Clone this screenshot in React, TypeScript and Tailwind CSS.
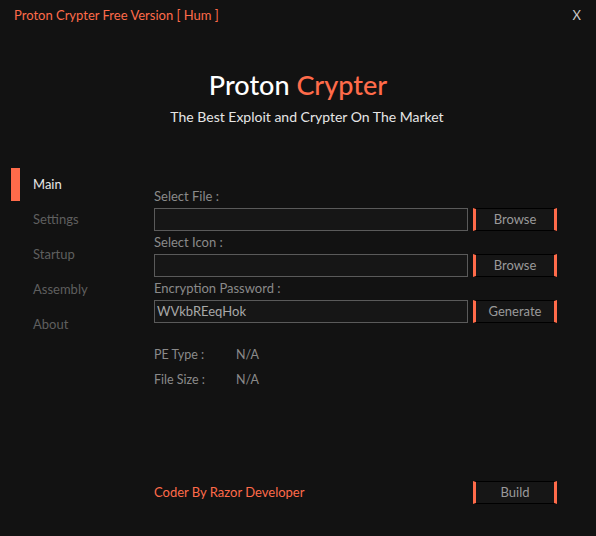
import React from "react";

const font = { fontFamily: "Lato, 'Open Sans', sans-serif" };

const NavItem = ({ label, active }: { label: string; active?: boolean }) => (
    <div className="flex items-center h-[35px]">
        <div className={`w-[9px] h-[33px] ${active ? "bg-[#ff6b4a]" : "bg-transparent"}`} />
        <span className={`ml-[13px] text-[13px] ${active ? "text-[#e8e8e8]" : "text-[#5f5f5f]"}`}>
            {label}
        </span>
    </div>
);

const SideButton = ({ label }: { label: string }) => (
    <button className="w-[84px] h-[23px] flex items-center justify-center bg-[#161616] border-y border-black border-x-[3px] border-x-[#ff6b4a] text-[13px] text-[#9a9a9a]">
        {label}
    </button>
);

const Field = ({ label, value, button }: { label: string; value?: string; button: string }) => (
    <div className="flex flex-col">
        <span className="text-[13px] text-[#8a8a8a] h-[23px] leading-[23px]">{label}</span>
        <div className="flex items-center justify-between">
            <div className="w-[314px] h-[23px] border border-[#5a5a5a] bg-[#161616] flex items-center px-[2px] text-[13px] text-[#a8a8a8]">
                {value}
            </div>
            <SideButton label={button} />
        </div>
    </div>
);

export default function App() {
    return (
        <div className="w-[596px] h-[536px] bg-[#121212] flex flex-col" style={font}>
            {/* title bar */}
            <div className="flex justify-between items-center h-[32px] px-[14px]">
                <span className="text-[13px] text-[#ff6b4a]">Proton Crypter Free Version [ Hum ]</span>
                <span className="text-[13px] text-[#c8c8c8] mr-[1px]">X</span>
            </div>

            {/* header */}
            <div className="flex flex-col items-center mt-[36px]">
                <h1 className="text-[27px] leading-[34px] font-medium text-white">
                    Proton <span className="text-[#ff6b4a]">Crypter</span>
                </h1>
                <p className="text-[14px] leading-[20px] text-[#e6e6e6] mt-[5px] ml-[18px]">
                    The Best Exploit and Crypter On The Market
                </p>
            </div>

            <div className="flex flex-1 mt-[40px]">
                <nav className="w-[154px] pl-[11px] flex flex-col">
                    <NavItem label="Main" active />
                    <NavItem label="Settings" />
                    <NavItem label="Startup" />
                    <NavItem label="Assembly" />
                    <NavItem label="About" />
                </nav>

                <main className="w-[403px] flex flex-col pt-[18px] pb-[32px]">
                    <Field label="Select File :" button="Browse" />
                    <Field label="Select Icon :" button="Browse" />
                    <Field label="Encryption Password :" value="WVkbREeqHok" button="Generate" />

                    <div className="mt-[23px] flex flex-col gap-[7px] text-[12.5px] text-[#8a8a8a]">
                        <div className="flex h-[18px] items-center">
                            <span className="w-[82px]">PE Type :</span>
                            <span>N/A</span>
                        </div>
                        <div className="flex h-[18px] items-center">
                            <span className="w-[82px]">File Size :</span>
                            <span>N/A</span>
                        </div>
                    </div>

                    <div className="mt-auto flex items-center justify-between">
                        <span className="text-[13px] text-[#ff6b4a]">Coder By Razor Developer</span>
                        <SideButton label="Build" />
                    </div>
                </main>
            </div>
        </div>
    );
}
